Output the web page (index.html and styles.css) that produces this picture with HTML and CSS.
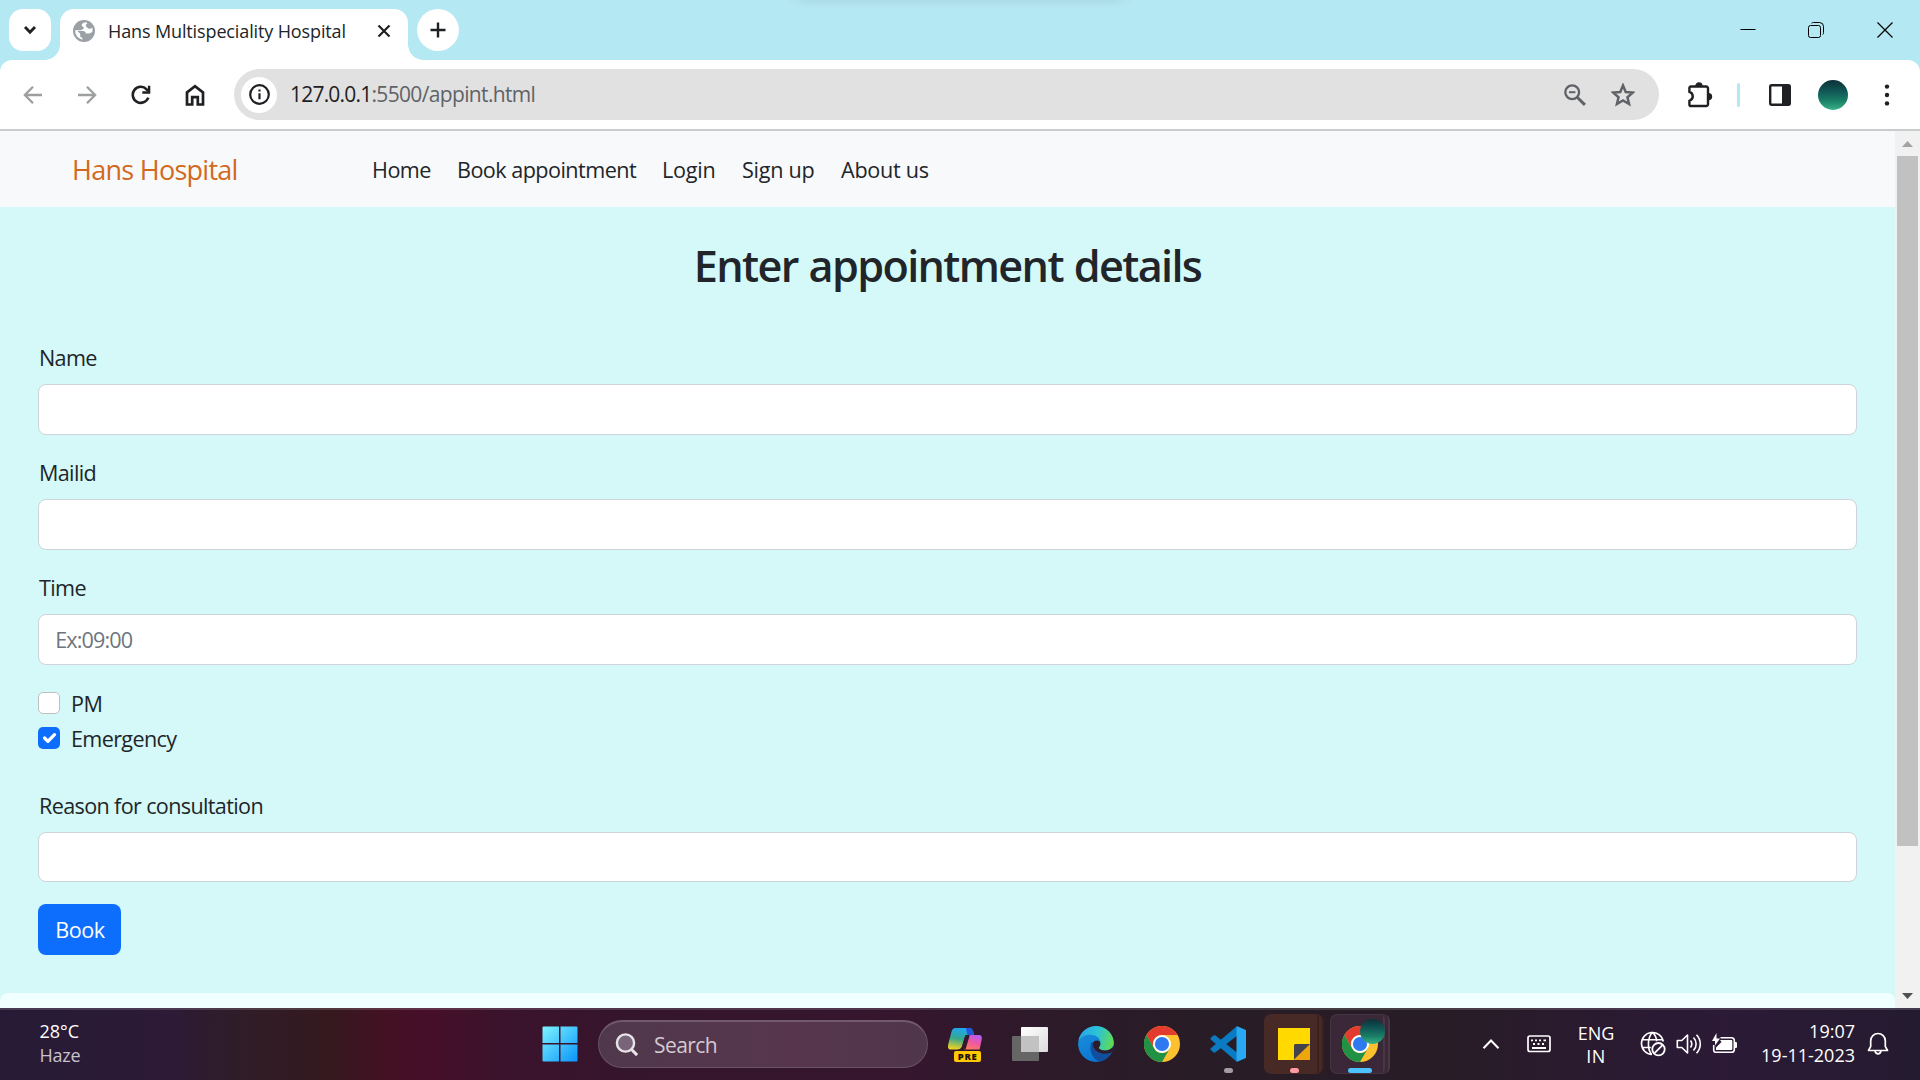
FILE: index.html
```
<!DOCTYPE html>
<html lang="en">
<head>
<meta charset="utf-8">
<title>Hans Multispeciality Hospital</title>
<link rel="stylesheet" href="styles.css">
</head>
<body>
<div class="desktop">
  <header class="tabstrip">
    <button class="tab-search" aria-label="Search tabs"><svg width="14" height="10" viewBox="0 0 14 10"><path d="M2 2l5 5.200 5-5.200" fill="none" stroke="#1f2023" stroke-width="2.800"/></svg></button>
    <div class="tab">
      <svg class="favicon" width="22" height="22" viewBox="0 0 22 22"><circle cx="11" cy="11" r="11" fill="#9aa0a6"/><path d="M13 2.300c-2.500.2-4.300 1.300-4.300 3 0 1.500 2.200 1.300 2.200 2.800 0 1.300-1.800 1-2.600 2.100H2.100a9 9 0 0 0 7.300 9.500v-1.900c-1.700-.2-2.200-1-2.200-2.300v-1.800L4.500 11h5.600c1.700 0 2.700.9 2.700 2.600h2.500c1.500 0 2.700-.6 4-1.500a9 9 0 0 0 .1-4.300c-1.600.9-4 1.500-4.700.2-.7-1.300-1.800-.8-1.800-2.600 0-1 .6-1.700 1.500-2.200z" fill="#fff"/></svg>
      <span class="tab-title">Hans Multispeciality Hospital</span>
      <svg class="tab-close" width="14" height="14" viewBox="0 0 14 14"><path d="M1.500 1.500l11 11M12.500 1.500l-11 11" stroke="#1f2023" stroke-width="2.200"/></svg>
    </div>
    <button class="new-tab" aria-label="New tab"><svg width="16" height="16" viewBox="0 0 16 16"><path d="M8 .5v15M.5 8h15" stroke="#1f2023" stroke-width="2.400"/></svg></button>
    <div class="window-buttons">
      <span><svg width="16" height="16" viewBox="0 0 16 16"><path d="M.5 7.500h15" stroke="#000"/></svg></span>
      <span><svg width="16" height="16" viewBox="0 0 16 16" fill="none" stroke="#000"><rect x=".5" y="3.500" width="12" height="12" rx="2"/><path d="M3.500 1.200C4.200.7 4.700.5 5.500.5h6a4 4 0 0 1 4 4v6c0 .8-.2 1.500-.7 2"/></svg></span>
      <span><svg width="16" height="16" viewBox="0 0 16 16"><path d="M.5.5l15 15M15.500.5l-15 15" stroke="#000" stroke-width="1.200"/></svg></span>
    </div>
  </header>

  <div class="toolbar">
    <span class="tool"><svg width="20" height="20" viewBox="0 0 20 20" fill="none" stroke="#9d9e9f" stroke-width="2.300"><path d="M19 10H2.500M10 1.800L1.900 10l8.100 8.200"/></svg></span>
    <span class="tool"><svg width="20" height="20" viewBox="0 0 20 20" fill="none" stroke="#9d9e9f" stroke-width="2.300"><path d="M1 10h16.500M10 1.800l8.100 8.200-8.100 8.200"/></svg></span>
    <span class="tool"><svg width="20" height="20" viewBox="0 0 20 20"><path d="M17.300 12.600A8 8 0 1 1 15.600 4.300L17 5.900" fill="none" stroke="#1f2023" stroke-width="2.600"/><path d="M19.300.8v7.900h-8V6.300h5.600V.8z" fill="#1f2023"/></svg></span>
    <span class="tool"><svg width="20" height="22" viewBox="0 0 20 22"><path d="M2 20.500V8.500L10 2.200l8 6.300v12h-5.200v-7.300H7.200v7.300z" fill="none" stroke="#1f2023" stroke-width="2.700"/></svg></span>
    <div class="omnibox">
      <span class="site-info"><svg width="21" height="21" viewBox="0 0 21 21"><circle cx="10.500" cy="10.500" r="9.300" fill="none" stroke="#1f2023" stroke-width="2.200"/><path d="M10.500 9.300v6M10.500 5.400v2.200" stroke="#1f2023" stroke-width="2.200"/></svg></span>
      <span class="url"><span class="url-host">127.0.0.1</span>:5500/appint.html</span>
      <svg class="zoom-icon" width="22" height="22" viewBox="0 0 22 22" fill="none" stroke="#5f6266"><circle cx="8.200" cy="8.200" r="6.900" stroke-width="2.300"/><path d="M13.200 13.200l7.700 7.700" stroke-width="2.900"/><path d="M5 8.200h6.400" stroke-width="2"/></svg>
      <svg class="star-icon" width="24" height="24" viewBox="0 0 24 24"><path d="M12 2.500l2.750 6.500 7 .6-5.300 4.600 1.600 6.800L12 17.400 5.950 21l1.600-6.800-5.300-4.600 7-.6z" fill="none" stroke="#5f6266" stroke-width="2.500"/></svg>
    </div>
    <span class="tool extensions"><svg width="26" height="26" viewBox="0 0 26 26"><path d="M4 4.500h15.200a1.800 1.800 0 0 1 1.800 1.800V22.200a1.800 1.800 0 0 1-1.800 1.800H4a1.600 1.600 0 0 1-1.600-1.600V18.800A4.700 4.700 0 0 0 2.400 9.800V6.100A1.600 1.600 0 0 1 4 4.500z" fill="none" stroke="#1f2023" stroke-width="2.400"/><path d="M8.800 4a3.100 3.100 0 0 1 6.200 0zM21.500 11.500a3.100 3.100 0 0 1 0 6.200z" fill="#1f2023" stroke="#1f2023" stroke-width="1.200"/></svg></span>
    <span class="divider"></span>
    <span class="tool side-panel"><svg width="22" height="22" viewBox="0 0 22 22"><rect x="1.200" y="1.200" width="19.600" height="19.600" rx="1.500" fill="none" stroke="#1f2023" stroke-width="2.400"/><path d="M13 1h8v20h-8z" fill="#1f2023"/></svg></span>
    <span class="tool profile"><span class="avatar"></span></span>
    <span class="tool"><svg width="6" height="22" viewBox="0 0 6 22" fill="#1f2023"><circle cx="3" cy="2.600" r="2.200"/><circle cx="3" cy="11" r="2.200"/><circle cx="3" cy="19.400" r="2.200"/></svg></span>
  </div>

  <div class="viewport">
    <div class="page">
      <nav class="navbar">
        <a class="brand">Hans Hospital</a>
        <ul class="links"><li>Home</li><li>Book appointment</li><li>Login</li><li>Sign up</li><li>About us</li></ul>
      </nav>
      <main class="content">
        <h1>Enter appointment details</h1>
        <form>
          <div class="group"><label for="name">Name</label><input id="name" class="control" type="text"></div>
          <div class="group"><label for="mail">Mailid</label><input id="mail" class="control" type="text"></div>
          <div class="group"><label for="time">Time</label><input id="time" class="control" type="text" placeholder="Ex:09:00"></div>
          <div class="check"><span class="box"></span><span class="pm">PM</span></div>
          <div class="check"><span class="box checked"><svg width="22" height="22" viewBox="0 0 20 20"><path d="M6 10l3 3 6-6" fill="none" stroke="#fff" stroke-width="3" stroke-linecap="round" stroke-linejoin="round"/></svg></span><span>Emergency</span></div>
          <div class="group reason"><label for="reason">Reason for consultation</label><input id="reason" class="control" type="text"></div>
          <button class="book" type="button">Book</button>
        </form>
      </main>
      <footer class="footer"></footer>
    </div>
    <div class="scrollbar">
      <svg width="11" height="6" viewBox="0 0 11 6"><path d="M5.500 0L11 6H0z" fill="#a3a3a3"/></svg>
      <span class="thumb"></span>
      <svg class="down" width="11" height="6" viewBox="0 0 11 6"><path d="M0 0h11L5.500 6z" fill="#505050"/></svg>
    </div>
  </div>

  <footer class="taskbar">
    <div class="weather"><span>28°C</span><span class="haze">Haze</span></div>
    <span class="slot"><svg width="36" height="36" viewBox="0 0 36 36"><defs><linearGradient id="win" x1="0" y1="0" x2="1" y2="1"><stop offset="0" stop-color="#7df3ff"/><stop offset="1" stop-color="#0a94fb"/></linearGradient></defs><path d="M1.500.5H17v16.500H.5V1.500a1 1 0 0 1 1-1zM18.500.5h16a1 1 0 0 1 1 1V17h-17zM.5 18.500H17v17H1.500a1 1 0 0 1-1-1zM18.500 18.500h17v16a1 1 0 0 1-1 1h-16z" fill="url(#win)"/></svg></span>
    <div class="search"><svg width="24" height="24" viewBox="0 0 24 24" fill="none" stroke="#e9e4e8" stroke-width="2.400"><circle cx="10.500" cy="10" r="8.600" fill="#79657a"/><path d="M16.300 16.300l5.800 5.800" stroke-width="3"/></svg><span>Search</span></div>
    <span class="slot copilot"><svg width="36" height="34" viewBox="0 0 36 34"><defs><linearGradient id="cpa" x1=".5" y1="0" x2=".3" y2="1"><stop offset="0" stop-color="#20a6f2"/><stop offset=".5" stop-color="#35a88f"/><stop offset="1" stop-color="#f3d320"/></linearGradient><linearGradient id="cpb" x1=".7" y1="0" x2=".3" y2="1"><stop offset="0" stop-color="#b65cf5"/><stop offset=".5" stop-color="#ee58a0"/><stop offset="1" stop-color="#ff7a61"/></linearGradient></defs><path d="M8.500 1H22c3 0 4.200 2 5 7h-5.500c-3 0-3.600 1.500-4.500 4.500l-1.900 6.500c-.9 2.500-2.400 3.500-5 3.500H3.500C1 22.500.6 20 1.300 17l3-11.500C5.100 2.500 6 1 8.500 1z" fill="url(#cpa)"/><path d="M19 1h3c3 0 4.200 2 5 7h-6.500z" fill="#2558d8"/><path d="M22.300 8H32c2.700 0 3.300 2.200 2.600 5l-2 9.500H16.500l2.700-10c.8-3 1.200-4.500 3.100-4.500z" fill="url(#cpb)"/><path d="M18.500 8h4.300l-4.300 14.500h-4.300z" fill="#34192d"/></svg><span class="pre">PRE</span></span>
    <span class="slot"><svg width="36" height="36" viewBox="0 0 36 36"><defs><linearGradient id="tv" x1="0" y1="0" x2="1" y2="1"><stop offset="0" stop-color="#fff"/><stop offset="1" stop-color="#dcdcdc"/></linearGradient></defs><rect x="9" y="1" width="27" height="25" rx="1" fill="url(#tv)"/><rect y="10" width="27" height="25" rx="1" fill="#666"/><path d="M9 10h17a1 1 0 0 1 1 1v15H9z" fill="#c2c2c2"/></svg></span>
    <span class="slot"><svg width="36" height="36" viewBox="0 0 36 36"><defs><linearGradient id="eg" x1="0" y1=".4" x2="1" y2=".6"><stop offset="0" stop-color="#2aa5e8"/><stop offset=".5" stop-color="#2cc3d6"/><stop offset="1" stop-color="#61dc4d"/></linearGradient><linearGradient id="eb" x1="0" y1="0" x2=".5" y2="1"><stop offset="0" stop-color="#1d93dc"/><stop offset="1" stop-color="#0a74d2"/></linearGradient><clipPath id="ec"><circle cx="18" cy="18" r="18"/></clipPath></defs><g clip-path="url(#ec)"><circle cx="18" cy="18" r="18" fill="url(#eb)"/><path d="M0 16C1 6.500 8.500 0 18 0c10.500 0 18 7.500 18 15.500 0 6-4.500 9-9 9-4 0-6.200-1.400-6.200-2.700 0-1 1.600-1.600 1.600-5C22.400 12 18 8.800 12 8.800 6.500 8.800 2 11.500 0 16z" fill="url(#eg)"/><path d="M14.500 19c0-2.700 1.800-4.600 4.200-4.600 2.200 0 3.700 1.100 3.700 3 0 2.900-1.600 3.400-1.600 4.400 0 1.300 2.200 2.700 6.200 2.700 4.300 0 6.800-1.700 8.500-4.300H37v6l-3.500 1c-1.500.7-4 1.600-7 1.600-7.500 0-12-5-12-9.800z" fill="#2e1a29"/><path d="M13.500 16.500c-3.500 8 2 18 9.500 19.500 5-1.300 8.600-4.300 10.900-8.900.3-.7-.2-1-.8-.7-1.600.7-3.600 1.200-6 1.200-7.600 0-12.100-4.600-12.100-9.100 0-.9.200-1.700.5-2.400-.9.100-1.600.1-2 .4z" fill="#114f9e"/></g></svg></span>
    <span class="slot"><svg width="36" height="36" viewBox="0 0 36 36"><g id="chrome"><circle cx="18" cy="18" r="18" fill="#fdc02f"/><path d="M2.400 9A18 18 0 0 1 33.600 9H18a9 9 0 0 0-7.800 13.500z" fill="#e33b2e"/><path d="M2.400 9l7.800 13.500A9 9 0 0 0 25.800 22.500L18 36A18 18 0 0 1 2.400 9z" fill="#219145"/><circle cx="18" cy="18" r="9" fill="#fff"/><circle cx="18" cy="18" r="7.100" fill="#2f79f0"/></g></svg></span>
    <span class="slot running"><svg width="36" height="36" viewBox="0 0 36 36"><path d="M.5 12.300l2.800-2.700c.8-.6 1.400-.6 2.200 0L27.500 27 26.500 35.500 1 13.800c-.6-.6-.6-1-.5-1.500z" fill="#0a7ac2"/><path d="M.5 23.500l2.800 2.700c.8.600 1.400.6 2.200 0L27.500 9.500 26.500.5 1 22c-.6.600-.6 1-.5 1.500z" fill="#0a7ac2"/><path d="M26.500 0L36 4v28l-9.500 4z" fill="#29a9f3"/></svg></span>
    <span class="slot running tile notes"><svg width="32" height="32" viewBox="0 0 32 32"><path d="M0 0h32v32H0z" fill="#ffd900"/><path d="M16 16h16v16H16z" fill="#eda60b"/><path d="M16 17.500a1.500 1.500 0 0 1 1.500-1.500H32L16 31.500z" fill="#44424a"/></svg></span>
    <span class="slot running tile active"><svg width="36" height="36" viewBox="0 0 36 36"><use href="#chrome"/></svg><span class="avatar badge"></span></span>
    <div class="tray">
      <span class="tray-wide"><svg width="18" height="12" viewBox="0 0 18 12"><path d="M1.500 10.300L9 2.500l7.500 7.800" fill="none" stroke="#fff" stroke-width="2"/></svg></span>
      <span class="tray-wide"><svg width="24" height="18" viewBox="0 0 24 18"><rect x="1" y="1" width="22" height="15.500" rx="2" fill="none" stroke="#fff" stroke-width="1.700"/><path d="M4 5.300h2M8 5.300h2M12 5.300h2M16.500 5.300h2.500M6 9h2M10.500 9h2M15 9h2M5 13h14" stroke="#fff" stroke-width="1.800"/></svg></span>
      <span class="lang"><span>ENG</span><span class="in">IN</span></span>
      <span class="tray-icon"><svg width="26" height="26" viewBox="0 0 26 26" fill="none" stroke="#fff" stroke-width="1.600"><path d="M12 23.500A11 11 0 1 1 23.300 10.500M2 8.800h21M1.800 16.500h9M12.500 1.300C7.500 6 7 18 11.500 23.300M12.500 1.300c2.700 2.500 4 6 4.200 9"/><circle cx="18.500" cy="18.200" r="6.200" stroke-width="1.800"/><path d="M14.500 22.200l8-8" stroke-width="1.800"/></svg></span>
      <span class="tray-icon"><svg width="26" height="22" viewBox="0 0 26 22" fill="none" stroke="#fff" stroke-width="1.600"><path d="M1.300 7.500h4.500L11.500 2v18l-5.700-5.500H1.300z" stroke-linejoin="round"/><path d="M14.500 7.500c1.500 2 1.500 5 0 7M17.500 4.500c3.500 3.700 3.500 9.300 0 13M20.500 1.800c5 5.300 5 13.100 0 18.400"/></svg></span>
      <span class="tray-icon"><svg width="26" height="22" viewBox="0 0 26 22"><path d="M8.500 4.800H19.500a2.800 2.800 0 0 1 2.800 2.800v8.800a2.800 2.800 0 0 1-2.800 2.800H4a2.300 2.300 0 0 1-2.300-2.300V12" fill="none" stroke="#fff" stroke-width="1.600"/><path d="M8 7h11.300a1 1 0 0 1 1 1v8a1 1 0 0 1-1 1H4v-2.500L9.500 9z M23 9h1a1 1 0 0 1 1 1v4a1 1 0 0 1-1 1h-1zM4.500 0v5.500H8L3 12.500V8H0z" fill="#fff"/></svg></span>
      <span class="clock"><span>19:07</span><span>19-11-2023</span></span>
      <span class="bell"><svg width="22" height="24" viewBox="0 0 22 24" fill="none" stroke="#fff" stroke-width="1.700"><path d="M11 1.500A7.300 7.300 0 0 0 3.700 8.800v5.500L1.500 18.500h19l-2.200-4.200V8.800A7.300 7.300 0 0 0 11 1.500z" stroke-linejoin="round"/><path d="M8 19c.4 1.800 1.500 2.800 3 2.800s2.600-1 3-2.800"/></svg></span>
    </div>
  </footer>
</div>
</body>
</html>
```
FILE: styles.css
```
*, *::before, *::after { box-sizing: border-box; }
body { margin: 0; font-family: "Open Sans", "Noto Sans", sans-serif; color: #212529; }
button { border: 0; padding: 0; font: inherit; }
svg { display: block; flex: none; }

.desktop { width: 1920px; height: 1080px; overflow: hidden; display: flex; flex-direction: column; background: #b4e8f2; }

/* Tab strip */
.tabstrip { height: 60px; flex: none; display: flex; align-items: flex-start; padding: 9px 0 0 9px; background: linear-gradient(90deg, #b4e8f2, rgba(180, 232, 242, 0) 25px, rgba(180, 232, 242, 0) 325px, #b4e8f2) 785px 0 / 350px 8px no-repeat, linear-gradient(#abdce8, #b4e8f2) 785px 0 / 350px 8px no-repeat #b4e8f2; }
.tab-search, .new-tab { width: 42px; height: 42px; display: flex; align-items: center; justify-content: center; background: #fff; }
.tab-search { border-radius: 14px; }
.new-tab { border-radius: 50%; margin-left: 9px; }
.tab { position: relative; width: 348px; height: 51px; margin-left: 9px; padding: 0 17px 8px 13px; display: flex; align-items: center; background: #fff; border-radius: 14px 14px 0 0; }
.tab::before, .tab::after { content: ""; position: absolute; bottom: 0; width: 15px; height: 15px; }
.tab::before { right: 100%; background: radial-gradient(circle at 0 0, transparent 14.500px, #fff 15px); }
.tab::after { left: 100%; background: radial-gradient(circle at 100% 0, transparent 14.500px, #fff 15px); }
.tab-title { margin-left: 13px; padding-top: 1px; flex: 1; font-size: 18px; font-weight: 500; letter-spacing: -.007em; white-space: nowrap; }
.tab-close { margin-top: 1px; }
.window-buttons { margin-left: auto; margin-right: 1px; height: 42px; display: flex; }
.window-buttons span { width: 68.500px; display: flex; align-items: center; justify-content: center; }

/* Toolbar */
.toolbar { height: 71px; flex: none; display: flex; align-items: center; padding: 0 6px; background: #fff; border-bottom: 2px solid #c9cccd; border-radius: 12px 12px 0 0; }
.tool { width: 54px; display: flex; justify-content: center; flex: none; }
.omnibox { width: 1425px; height: 51px; margin-left: 12px; padding: 0 24px 0 7px; display: flex; align-items: center; border-radius: 26px; background: #e1e1e1; }
.site-info { width: 36px; height: 36px; display: flex; align-items: center; justify-content: center; border-radius: 50%; background: #fff; }
.url { flex: 1; margin-left: 13px; padding-bottom: 2px; font-size: 21px; letter-spacing: -.031em; color: #606366; }
.url-host { color: #1f2023; letter-spacing: -.038em; }
.star-icon { margin-left: 25px; }
.extensions { margin-left: 14px; }
.divider { width: 3px; height: 24px; margin-left: 10px; border-radius: 2px; background: #b4e8f2; }
.side-panel { margin-left: 13px; }
.profile { margin-left: -1px; }
.avatar { width: 30px; height: 30px; border-radius: 50%; background: linear-gradient(#0b3038, #115a57 40%, #1b8067 70%, #37b189); }

/* Web page */
.viewport { height: 877px; flex: none; display: flex; background: #d4f9f8; }
.page { flex: 1; display: flex; flex-direction: column; }
.navbar { height: 76px; flex: none; display: flex; align-items: center; padding: 2px 0 0 72px; background: #f8f9fb; }
.brand { width: 300px; font-size: 27px; line-height: 40.500px; letter-spacing: -.027em; color: #d2691e; }
.links { margin: 0; padding: 0; list-style: none; display: grid; grid-template-columns: 85px 205px 80px 99px auto; font-size: 21.600px; line-height: 32.400px; letter-spacing: -.025em; white-space: nowrap; }
.links li:nth-child(n+3) { letter-spacing: -.012em; }
.content { height: 786px; padding: 33px 38px 0; font-size: 21.600px; line-height: 32.400px; letter-spacing: -.030em; }
.content h1 { margin: 0 0 49.300px; text-align: center; font-size: 43.200px; line-height: 51.800px; font-weight: 600; letter-spacing: -.038em; word-spacing: .03em; }
.group { margin-bottom: 21.600px; }
.group label { display: block; height: 43px; padding: 1px 0 0 1px; }
.control { display: block; width: 100%; height: 50.600px; padding: 0 16.200px; border: 1px solid #ced4da; border-radius: 8px; background: #fff; font: inherit; letter-spacing: -.040em; }
.control::placeholder { color: #6c757d; opacity: 1; }
.check { height: 32.400px; margin-bottom: 2.700px; display: flex; }
.check > span + span { padding-top: 1px; }
.check .pm { letter-spacing: -.02em; }
.box { width: 22px; height: 22px; margin: 5px 11px 0 0; border: 1px solid #bfbfbf; border-radius: 5px; background: #fff; }
.checked { border: 0; background: #0d6efd; }
.reason { margin-top: 34.400px; }
.book { display: block; height: 51px; width: 83px; padding: 1px 0 0 1px; border-radius: 8px; background: #0d6efd; color: #fff; letter-spacing: -.020em; }
.footer { flex: 1; border-radius: 8px 8px 0 0; background: #f0ffff; }
.scrollbar { width: 25px; display: flex; flex-direction: column; align-items: center; padding: 10px 0 9px; background: #f1f1f1; }
.thumb { width: 21px; height: 690px; margin-top: 9px; background: #c1c1c1; }
.down { margin-top: auto; }

/* Taskbar */
.taskbar { height: 72px; flex: none; display: flex; align-items: center; color: #fff; border-top: 2px solid rgba(255, 255, 255, .14); background: linear-gradient(90deg, #261b36 0, #2d1a36 170px, #301d28 245px, #35191f 325px, #441124 390px, #460f2a 430px, #3b132c 500px, #34152c 640px, #35162e 900px, #2d1a2a 1040px, #281c26 1200px, #281c26 1440px, #2a1a30 1600px, #2c1a36 1720px, #241b30 1920px) 0 -2px / 100% 74px; }
.weather { width: 527px; padding-left: 39.500px; display: flex; flex-direction: column; font-size: 18px; line-height: 24px; padding-bottom: 4px; }
.haze { color: #c9c2cb; letter-spacing: -.015em; }
.slot { position: relative; width: 66px; height: 100%; display: flex; align-items: center; justify-content: center; flex: none; padding-bottom: 2px; }
.search { width: 330px; height: 48px; margin: 0 4px 2px 5px; padding: 0 18px 0 16px; display: flex; align-items: center; gap: 15px; border: 1px solid #6a5267; border-top: 2px solid #725a6e; border-radius: 24px; background: linear-gradient(90deg, #50384c, #57364d 60%, #50364b); font-size: 21px; letter-spacing: -.028em; color: #d3cad2; }
.copilot { width: 65px; }
.pre { position: absolute; left: 22px; top: 41px; width: 27px; height: 11px; border-radius: 2px; background: #ffc800; color: #1d1208; font-size: 9.500px; line-height: 11px; font-weight: 800; letter-spacing: .06em; text-align: center; }
.running::after { content: ""; position: absolute; left: 29px; bottom: 7px; width: 9px; height: 5px; border-radius: 3px; background: #a39da3; }
.tile::before { content: ""; position: absolute; left: 3px; top: 4px; width: 60px; height: 60px; border-radius: 7px; background: #472926; }
.tile > svg { position: relative; }
.notes::before { border-right: 7px double #3b211e; }
.notes::after { background: #ff9ba5; }
.active::before { background: #3a2838; border: 1px solid #463443; border-right: 7px double #4a3846; }
.active::after { left: 21px; width: 24px; background: #4cc2ff; }
.badge { position: absolute; left: 33px; top: 9px; width: 25px; height: 25px; }
.tray { margin-left: auto; padding-right: 24px; display: flex; align-items: center; height: 100%; font-size: 18px; }
.tray > span { display: flex; align-items: center; justify-content: center; padding-bottom: 2px; }
.tray-wide { width: 48px; }
.tray > .lang, .tray > .clock { flex-direction: column; }
.tray > .lang { width: 66px; margin-right: 6px; line-height: 23px; padding-bottom: 0; }
.in { letter-spacing: .03em; }
.tray-icon { width: 36px; }
.tray > .clock { width: 112px; align-items: flex-end; line-height: 24px; padding-bottom: 4px; }
.bell { width: 36px; margin-left: 5px; }
```
